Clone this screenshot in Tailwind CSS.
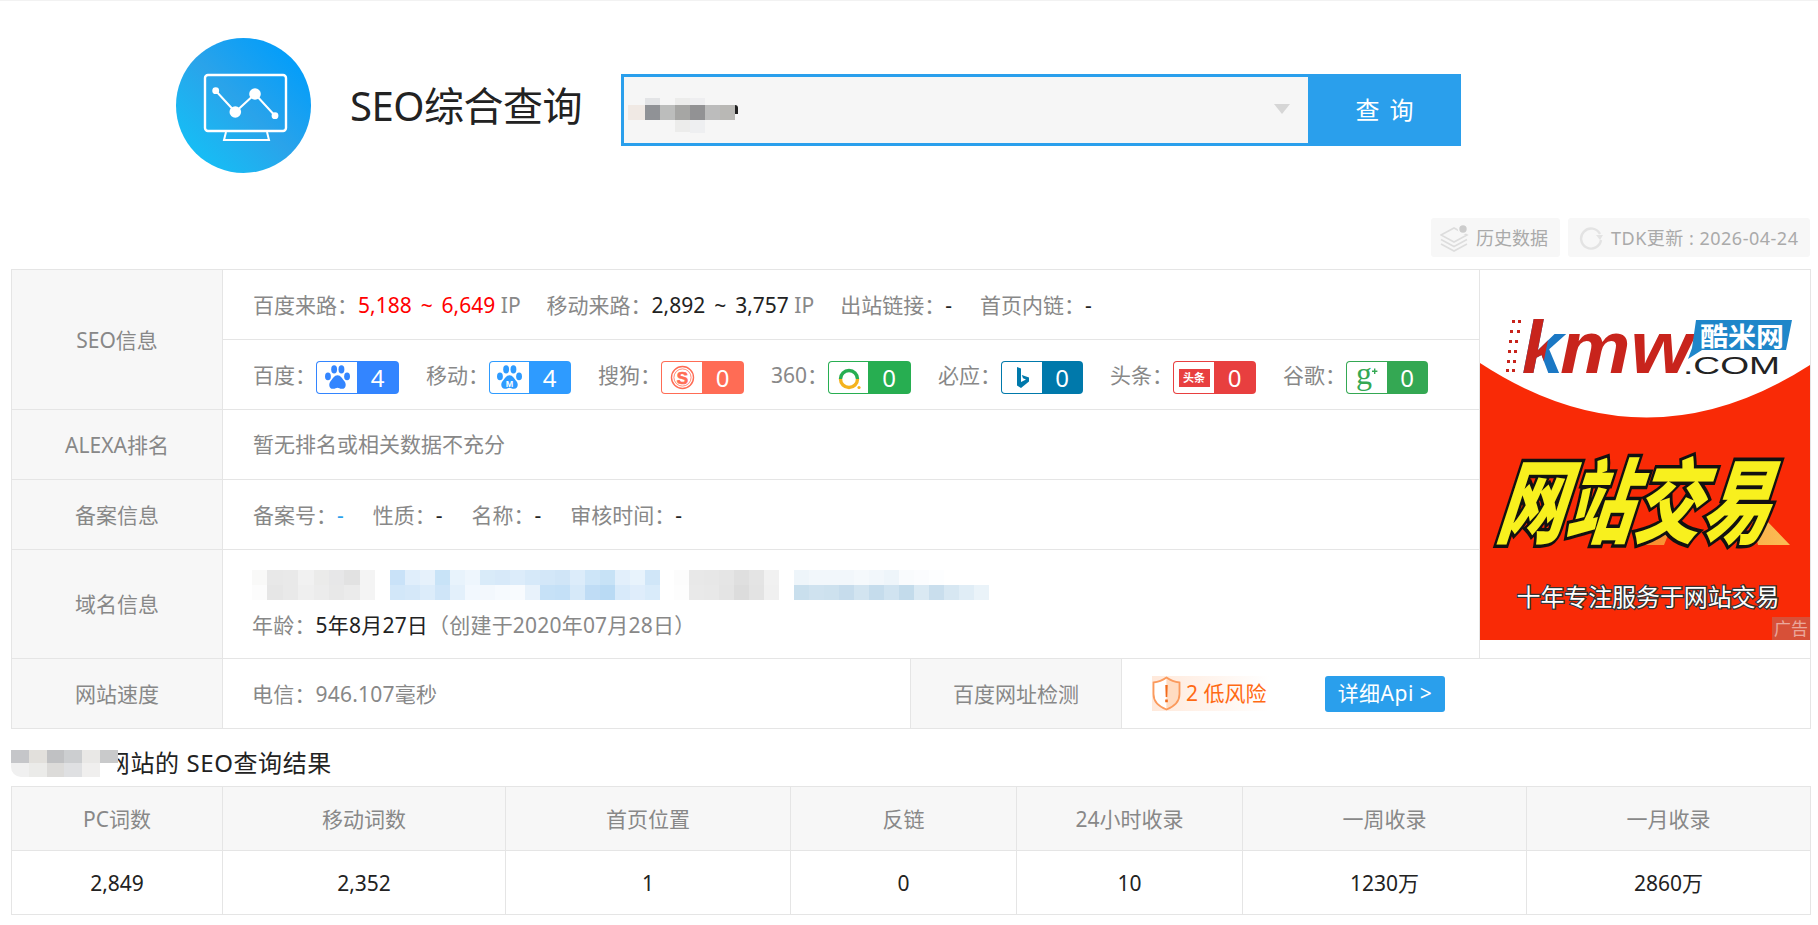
<!DOCTYPE html>
<html lang="zh-CN">
<head>
  <meta charset="UTF-8">
  <meta name="viewport" content="width=device-width, initial-scale=1.0">
  <title>SEO综合查询</title>
  <script src="https://cdn.jsdelivr.net/npm/@tailwindcss/browser@4"></script>
</head>
<body class="bg-white overflow-hidden font-['Noto_Sans','Noto_Sans_CJK_SC',sans-serif] text-[21px] text-[#888]">

  <div class="h-px bg-[#f2f2f2]"></div>

  <!-- Header -->
  <div class="flex items-center h-[209px] pl-[176px]">
    <svg class="w-[135px] h-[135px] shrink-0" viewBox="0 0 135 135">
      <defs>
        <linearGradient id="logoBg" x1="1" y1="0" x2="0" y2="1">
          <stop offset="0.1" stop-color="#009dfb"/>
          <stop offset="0.5" stop-color="#2aa3ea"/>
          <stop offset="0.9" stop-color="#14c0f6"/>
        </linearGradient>
      </defs>
      <circle cx="67.5" cy="67.5" r="67.5" fill="url(#logoBg)"/>
      <rect x="29" y="37" width="81" height="56" rx="3" fill="none" stroke="#fff" stroke-width="2.4"/>
      <path d="M50 94l-2 8h45l-2-8" fill="none" stroke="#fff" stroke-width="2"/>
      <path d="M39.7 52.7L59.3 74L79 56L99 77.7" fill="none" stroke="#fff" stroke-width="2"/>
      <circle cx="39.7" cy="52.7" r="3.4" fill="#fff"/>
      <circle cx="59.3" cy="74" r="5.8" fill="#fff"/>
      <circle cx="79" cy="56" r="5.8" fill="#fff"/>
      <circle cx="99" cy="77.7" r="3.4" fill="#fff"/>
    </svg>
    <h1 class="ml-[39px] mt-[1px] w-[231px] shrink-0 text-[40px] tracking-[-0.5px] leading-none font-normal text-[#222] whitespace-nowrap">SEO综合查询</h1>
    <div class="ml-[40px] mt-[9px] flex w-[840px] h-[72px] bg-[#2a9fec] shrink-0">
      <div class="flex items-center justify-between w-[684px] ml-[3px] my-[3px] bg-[#f6f6f6] pl-[4px] pr-[18px]">
        <div class="flex mt-[11px]">
          <div class="w-[17px] flex flex-col pt-[7px]"><div class="h-[15px] bg-[#f0e9e4]"></div></div>
          <div class="w-[15px] flex flex-col"><div class="h-[7px] bg-[#e3e4e6]"></div><div class="h-[15px] bg-[#909296]"></div></div>
          <div class="w-[15px] flex flex-col pt-[7px]"><div class="h-[15px] bg-[#bcbdbc]"></div></div>
          <div class="w-[15px] flex flex-col"><div class="h-[7px] bg-[#ececeb]"></div><div class="h-[15px] bg-[#a6a6a4]"></div><div class="h-[12px] bg-[#ececeb]"></div></div>
          <div class="w-[15px] flex flex-col"><div class="h-[7px] bg-[#eeeef0]"></div><div class="h-[15px] bg-[#929294]"></div><div class="h-[13px] bg-[#eeeff1]"></div></div>
          <div class="w-[15px] flex flex-col pt-[7px]"><div class="h-[15px] bg-[#bcbcbc]"></div></div>
          <div class="w-[15px] flex flex-col pt-[7px]"><div class="h-[15px] bg-[#b9b8b5]"></div></div>
          <div class="w-[3px] flex flex-col pt-[7px]"><div class="h-[9px] bg-[#222] rounded-tr-[3px]"></div></div>
        </div>
        <div class="-mt-[2px] w-0 h-0 border-x-[8px] border-x-transparent border-t-[10px] border-t-[#d6d6d6]"></div>
      </div>
      <div class="flex-1 flex items-center justify-center text-white text-[24px] [word-spacing:4px] whitespace-pre">查 询</div>
    </div>
  </div>

  <!-- Toolbar -->
  <div class="flex justify-end gap-[8px] pr-[8px] mt-[8px] h-[39px] text-[18px] text-[#aaa]">
    <div class="flex items-center gap-[7px] w-[129px] pl-[9px] bg-[#f7f7f7] rounded-[3px]">
      <svg class="w-[29px] h-[28px] shrink-0" viewBox="0 0 29 28" fill="none" stroke="#ddd" stroke-width="1.6">
        <path d="M1 11L14 4L27 11L14 18Z"/>
        <path d="M1 15.5L14 22.5L27 15.5"/>
        <path d="M1 20L14 27L27 20"/>
        <circle cx="23" cy="5" r="4.5" fill="#ccc" stroke="#f7f7f7"/>
      </svg>
      <span class="mt-px whitespace-nowrap">历史数据</span>
    </div>
    <div class="flex items-center gap-[8px] w-[242px] pl-[11px] bg-[#f7f7f7] rounded-[3px]">
      <svg class="w-[24px] h-[24px] shrink-0" viewBox="0 0 24 24" fill="none">
        <path d="M21 8A10 10 0 1 0 22 14" stroke="#e3e3e3" stroke-width="2.4"/>
        <path d="M17 9h7l-3 5z" fill="#e3e3e3"/>
      </svg>
      <span class="mt-px tracking-[0.5px] whitespace-nowrap">TDK更新 : 2026-04-24</span>
    </div>
  </div>

  <!-- SEO info table -->
  <div class="w-[1800px] ml-[11px] mt-[12px] border border-[#e5e5e5]">
    <div class="flex h-[389px] border-b border-[#e5e5e5]">
      <div class="flex flex-col w-[1467px] shrink-0">

        <div class="flex h-[140px] border-b border-[#e5e5e5]">
          <div class="w-[211px] shrink-0 flex items-center justify-center pt-[2px] bg-[#f7f7f7] border-r border-[#e5e5e5]">SEO信息</div>
          <div class="flex-1 flex flex-col">
            <div class="flex items-center gap-[26px] h-[70px] pl-[30px] pt-[2px] border-b border-[#e5e5e5] whitespace-nowrap">
              <span>百度来路：<span class="text-[#f00] [word-spacing:3.5px]">5,188 ~ 6,649</span> IP</span>
              <span>移动来路：<span class="text-[#222] [word-spacing:3.5px]">2,892 ~ 3,757</span> IP</span>
              <span>出站链接：<span class="text-[#222]">-</span></span>
              <span class="ml-[2px]">首页内链：<span class="text-[#222]">-</span></span>
            </div>
            <div class="flex items-center gap-[27px] flex-1 pl-[30px] pt-[6px] whitespace-nowrap">
              <div class="flex items-center">
                <span class="mb-[4px]">百度：</span>
                <div class="flex w-[83px] h-[33px] rounded-[4px] bg-[#3385ff] p-px items-stretch">
                  <div class="w-[40px] bg-white rounded-l-[3px] flex items-center justify-center">
                    <svg class="w-[27px] h-[27px]" viewBox="0 0 24 24" fill="#3385ff">
                      <ellipse cx="3.5" cy="11" rx="2.6" ry="3.4"/><ellipse cx="9" cy="4.8" rx="2.6" ry="3.6"/><ellipse cx="15.5" cy="4.8" rx="2.6" ry="3.6"/><ellipse cx="20.5" cy="11" rx="2.6" ry="3.4"/>
                      <path d="M12 10c-3 0-4 3-6 5-2 2-2 7 2 7 2 0 3-1 4-1s2 1 4 1c4 0 4-5 2-7-2-2-3-5-6-5z"/>
                    </svg>
                  </div>
                  <div class="flex-1 flex items-center justify-center text-white text-[24px]">4</div>
                </div>
              </div>
              <div class="flex items-center">
                <span class="mb-[4px]">移动：</span>
                <div class="flex w-[82px] h-[33px] rounded-[4px] bg-[#2e9bff] p-px items-stretch">
                  <div class="w-[39px] bg-white rounded-l-[3px] flex items-center justify-center">
                    <svg class="w-[27px] h-[27px]" viewBox="0 0 24 24" fill="#2e9bff">
                      <ellipse cx="3.5" cy="11" rx="2.6" ry="3.4"/><ellipse cx="9" cy="4.8" rx="2.6" ry="3.6"/><ellipse cx="15.5" cy="4.8" rx="2.6" ry="3.6"/><ellipse cx="20.5" cy="11" rx="2.6" ry="3.4"/>
                      <path d="M12 10c-3 0-4 3-6 5-2 2-2 7 2 7 2 0 3-1 4-1s2 1 4 1c4 0 4-5 2-7-2-2-3-5-6-5z"/>
                      <text x="12" y="20" text-anchor="middle" font-size="8" font-weight="700" fill="#fff" font-family="Liberation Sans">M</text>
                    </svg>
                  </div>
                  <div class="flex-1 flex items-center justify-center text-white text-[24px]">4</div>
                </div>
              </div>
              <div class="flex items-center">
                <span class="mb-[4px]">搜狗：</span>
                <div class="flex w-[83px] h-[33px] rounded-[4px] bg-[#ff6c55] p-px items-stretch">
                  <div class="w-[40px] bg-white rounded-l-[3px] flex items-center justify-center">
                    <svg class="w-[25px] h-[25px]" viewBox="0 0 25 25" fill="none" stroke="#ff6c55">
                      <circle cx="12.5" cy="12.5" r="11" stroke-width="1.4"/>
                      <circle cx="12.5" cy="12.5" r="8.6" stroke-width="0.8"/>
                      <text x="12.5" y="18.5" text-anchor="middle" font-size="17" font-weight="700" fill="#ff6c55" stroke="#ff6c55" stroke-width="0.7" font-family="Liberation Sans">S</text>
                    </svg>
                  </div>
                  <div class="flex-1 flex items-center justify-center text-white text-[24px]">0</div>
                </div>
              </div>
              <div class="flex items-center">
                <span class="mb-[4px]">360：</span>
                <div class="flex w-[83px] h-[33px] rounded-[4px] bg-[#27ae51] p-px items-stretch">
                  <div class="w-[39px] bg-white rounded-l-[3px] flex items-center justify-center">
                    <svg class="w-[24px] h-[24px]" viewBox="0 0 24 24" fill="none" stroke-width="3.4">
                      <path d="M3.5 13A8.5 8.5 0 0 1 20.5 13" stroke="#27ae51"/>
                      <path d="M3.5 13A8.5 8.5 0 0 0 20.5 13" stroke="#f4b31e"/>
                      <circle cx="22" cy="21.5" r="1.6" fill="#f4b31e" stroke="none"/>
                    </svg>
                  </div>
                  <div class="flex-1 flex items-center justify-center text-white text-[24px]">0</div>
                </div>
              </div>
              <div class="flex items-center">
                <span class="mb-[4px]">必应：</span>
                <div class="flex w-[82px] h-[33px] rounded-[4px] bg-[#0079ab] p-px items-stretch">
                  <div class="w-[40px] bg-white rounded-l-[3px] flex items-center justify-center">
                    <svg class="w-[24px] h-[28px]" viewBox="0 0 24 26" fill="#0079ab">
                      <path d="M7 2l4 1.500V17l5-2.500-3-1.200-1.200-3.300L19 12.500V16.500L11 23 7 20.500z"/>
                    </svg>
                  </div>
                  <div class="flex-1 flex items-center justify-center text-white text-[24px]">0</div>
                </div>
              </div>
              <div class="flex items-center">
                <span class="mb-[4px]">头条：</span>
                <div class="flex w-[83px] h-[33px] rounded-[4px] bg-[#e83f3f] p-px items-stretch">
                  <div class="w-[40px] bg-white rounded-l-[3px] flex items-center justify-center">
                    <div class="w-[31px] h-[18px] bg-[#e83f3f] flex items-center justify-center text-white text-[11px] leading-[18px] font-bold">头条</div>
                  </div>
                  <div class="flex-1 flex items-center justify-center text-white text-[24px]">0</div>
                </div>
              </div>
              <div class="flex items-center">
                <span class="mb-[4px]">谷歌：</span>
                <div class="flex w-[82px] h-[33px] rounded-[4px] bg-[#34a853] p-px items-stretch">
                  <div class="w-[40px] bg-white rounded-l-[3px] flex items-center justify-center">
                    <svg class="w-[30px] h-[28px]" viewBox="0 0 30 28" fill="#34a853">
                      <text x="4" y="20" font-size="32" font-family="Liberation Serif">g</text>
                      <path d="M20 6.500h2v-2h1.400v2h2v1.400h-2v2H22v-2h-2z"/>
                    </svg>
                  </div>
                  <div class="flex-1 flex items-center justify-center text-white text-[24px]">0</div>
                </div>
              </div>
            </div>
          </div>
        </div>

        <div class="flex h-[70px] border-b border-[#e5e5e5]">
          <div class="w-[211px] shrink-0 flex items-center justify-center pt-[2px] bg-[#f7f7f7] border-r border-[#e5e5e5]">ALEXA排名</div>
          <div class="flex-1 flex items-center pl-[30px] pt-[1px]">暂无排名或相关数据不充分</div>
        </div>

        <div class="flex h-[70px] border-b border-[#e5e5e5]">
          <div class="w-[211px] shrink-0 flex items-center justify-center pt-[2px] bg-[#f7f7f7] border-r border-[#e5e5e5]">备案信息</div>
          <div class="flex-1 flex items-center gap-[29px] pl-[30px] pt-[2px]">
            <span>备案号：<span class="text-[#2a9fec]">-</span></span>
            <span>性质：<span class="text-[#222]">-</span></span>
            <span>名称：<span class="text-[#222]">-</span></span>
            <span>审核时间：<span class="text-[#222]">-</span></span>
          </div>
        </div>

        <div class="flex flex-1">
          <div class="w-[211px] shrink-0 flex items-center justify-center pt-[2px] bg-[#f7f7f7] border-r border-[#e5e5e5]">域名信息</div>
          <div class="flex-1 flex flex-col pl-[29px] pt-[20px]">
            <!-- blurred registrar and owner -->
            <div class="flex h-[30px]">
              <div class="grid grid-cols-[repeat(8,15.4px)] grid-rows-2">
                <div class="bg-[#f9f9f8]"></div><div class="bg-[#e8e8e8]"></div><div class="bg-[#e9e9e9]"></div><div class="bg-[#f1f1f1]"></div><div class="bg-[#ebebea]"></div><div class="bg-[#e7e7e8]"></div><div class="bg-[#e2e2e2]"></div><div class="bg-[#f4f4f4]"></div>
                <div class="bg-[#fcfcfc]"></div><div class="bg-[#e6e6e6]"></div><div class="bg-[#e9e9e9]"></div><div class="bg-[#efefef]"></div><div class="bg-[#ececec]"></div><div class="bg-[#e8e8e8]"></div><div class="bg-[#ebebeb]"></div><div class="bg-[#f4f4f4]"></div>
              </div>
              <div class="ml-[15px] grid grid-cols-[repeat(18,15px)] grid-rows-2">
                <div class="bg-[#c9e2f8]"></div><div class="bg-[#e0eefb]"></div><div class="bg-[#e6f1fb]"></div><div class="bg-[#c8e3f7]"></div><div class="bg-[#e8f3fc]"></div><div class="bg-[#eef6fd]"></div><div class="bg-[#d9ebf9]"></div><div class="bg-[#d7e9f9]"></div><div class="bg-[#dcecfa]"></div><div class="bg-[#d6e9f9]"></div><div class="bg-[#d3e7f8]"></div><div class="bg-[#d0e5f7]"></div><div class="bg-[#dcecfa]"></div><div class="bg-[#cde5f8]"></div><div class="bg-[#c7e2f6]"></div><div class="bg-[#e2effb]"></div><div class="bg-[#e8f3fc]"></div><div class="bg-[#d0e6f8]"></div>
                <div class="bg-[#d2e7f9]"></div><div class="bg-[#d5e8f9]"></div><div class="bg-[#dcecfa]"></div><div class="bg-[#cfe5f8]"></div><div class="bg-[#e3f0fb]"></div><div class="bg-[#f2f8fe]"></div><div class="bg-[#f3f8fd]"></div><div class="bg-[#f6fafe]"></div><div class="bg-[#f8fbfe]"></div><div class="bg-[#e8f2fb]"></div><div class="bg-[#c6e1f7]"></div><div class="bg-[#c4e0f7]"></div><div class="bg-[#d6e9f9]"></div><div class="bg-[#bfdcf5]"></div><div class="bg-[#b9daf4]"></div><div class="bg-[#d8eafa]"></div><div class="bg-[#dfedfb]"></div><div class="bg-[#d9ebfa]"></div>
              </div>
              <div class="ml-[14px] grid grid-cols-[repeat(7,15px)] grid-rows-2">
                <div class="bg-[#fcfcfc]"></div><div class="bg-[#e8e8e8]"></div><div class="bg-[#e7e7e7]"></div><div class="bg-[#e5e5e5]"></div><div class="bg-[#dfdfdf]"></div><div class="bg-[#e4e4e4]"></div><div class="bg-[#f1f1f1]"></div>
                <div class="bg-[#fdfdfd]"></div><div class="bg-[#e9e9e9]"></div><div class="bg-[#e8e8e8]"></div><div class="bg-[#e4e4e4]"></div><div class="bg-[#dcdcdc]"></div><div class="bg-[#e3e3e3]"></div><div class="bg-[#f0f0f0]"></div>
              </div>
              <div class="ml-[15px] grid grid-cols-[repeat(13,15px)] grid-rows-[15px_15px]">
                <div class="bg-[#eef5fa]"></div><div class="bg-[#f2f7fb]"></div><div class="bg-[#f2f7fb]"></div><div class="bg-[#f2f7fb]"></div><div class="bg-[#f5f9fc]"></div><div class="bg-[#f2f7fb]"></div><div class="bg-[#eef5fa]"></div><div class="bg-[#f9fbfd]"></div><div class="bg-[#fbfcfe]"></div><div class="bg-[#fdfeff]"></div><div class="bg-white"></div><div class="bg-white"></div><div class="bg-white"></div>
                <div class="bg-[#c9dfed]"></div><div class="bg-[#cfe2ef]"></div><div class="bg-[#cde1ee]"></div><div class="bg-[#c6dcec]"></div><div class="bg-[#d2e4f0]"></div><div class="bg-[#c5dcec]"></div><div class="bg-[#d0e3f0]"></div><div class="bg-[#c3dbeb]"></div><div class="bg-[#dae9f3]"></div><div class="bg-[#c9deed]"></div><div class="bg-[#d7e7f2]"></div><div class="bg-[#e0edf6]"></div><div class="bg-[#eaf3f9]"></div>
              </div>
            </div>
            <div class="mt-[10px] tracking-[0.2px] whitespace-nowrap">年龄：<span class="text-[#222]">5年8月27日</span>（创建于2020年07月28日）</div>
          </div>
        </div>
      </div>

      <!-- Ad -->
      <div class="flex-1 border-l border-[#e5e5e5]">
        <svg class="block w-[330px] h-[370px]" viewBox="0 0 330 370">
          <defs>
            <clipPath id="kStem"><path d="M0 40H74L60 110H0Z"/></clipPath>
            <linearGradient id="glow" x1="0" y1="0" x2="1" y2="0">
              <stop offset="0" stop-color="#f98a2c"/>
              <stop offset="1" stop-color="#fbbd55"/>
            </linearGradient>
          </defs>
          <rect width="330" height="370" fill="#f92a06"/>
          <path d="M0 0H330V95Q165 201 0 93Z" fill="#fff"/>
          <g fill="#c8241c">
            <rect x="32" y="50" width="3" height="3"/><rect x="38" y="50" width="3" height="3"/><rect x="30" y="60" width="3" height="3"/><rect x="37" y="60" width="3" height="3"/><rect x="29" y="70" width="3" height="3"/><rect x="35" y="70" width="3" height="3"/><rect x="28" y="80" width="3" height="3"/><rect x="34" y="80" width="3" height="3"/><rect x="27" y="90" width="3" height="3"/><rect x="33" y="90" width="3" height="3"/><rect x="26" y="99" width="3" height="3"/><rect x="32" y="99" width="3" height="3"/>
          </g>
          <text x="42" y="103" font-family="Liberation Sans" font-weight="700" font-style="italic" font-size="74" fill="#1b78c4">k</text>
          <text x="42" y="103" font-family="Liberation Sans" font-weight="700" font-style="italic" font-size="74" fill="#c8241c" clip-path="url(#kStem)">k</text>
          <text x="80" y="103" font-family="Liberation Sans" font-weight="700" font-style="italic" font-size="74" fill="#c8241c" textLength="132" lengthAdjust="spacingAndGlyphs">mw</text>
          <path d="M216 50H312L306 80H222L208 89L212 78Z" fill="#1f86c9"/>
          <text x="262" y="76" text-anchor="middle" font-size="26" font-weight="700" fill="#fff" textLength="84" lengthAdjust="spacingAndGlyphs">酷米网</text>
          <text x="203" y="104" font-family="Liberation Sans" font-size="24" fill="#222" textLength="97" lengthAdjust="spacingAndGlyphs">.COM</text>
          <path d="M157 275L180 250H194L184 275ZM278 275L272 250H286L310 275Z" fill="url(#glow)"/>
          <g transform="translate(101 0) skewX(-18)">
            <text x="0" y="266" font-size="92" font-weight="900" fill="#f8f01e" stroke="#111" stroke-width="7" paint-order="stroke" textLength="273" lengthAdjust="spacingAndGlyphs">网站交易</text>
          </g>
          <text x="168" y="336" text-anchor="middle" font-size="24" fill="#fff" stroke="#333" stroke-width="2.500" paint-order="stroke" textLength="263">十年专注服务于网站交易</text>
          <rect x="292" y="347" width="38" height="23" fill="#999" fill-opacity="0.35"/>
          <text x="311" y="365" text-anchor="middle" font-size="17" fill="#fff" fill-opacity="0.5">广告</text>
        </svg>
      </div>
    </div>

    <div class="flex h-[69px]">
      <div class="w-[211px] shrink-0 flex items-center justify-center pt-[2px] bg-[#f7f7f7] border-r border-[#e5e5e5]">网站速度</div>
      <div class="w-[688px] shrink-0 flex items-center pl-[29px] pt-[2px] tracking-[0.2px] border-r border-[#e5e5e5]">电信：946.107毫秒</div>
      <div class="w-[211px] shrink-0 flex items-center justify-center pt-[2px] bg-[#f7f7f7] border-r border-[#e5e5e5]">百度网址检测</div>
      <div class="flex-1 flex items-center pl-[30px]">
        <div class="flex items-center gap-[5px] w-[117px] h-[35px] bg-gradient-to-r from-[#ffe9db] to-white">
          <svg class="w-[29px] h-[35px] shrink-0" viewBox="0 0 29 35">
            <path d="M14.500 1.500C11 4 6 6 1.500 6.500V18C1.500 26 8 31 14.500 33.500Z" fill="#fff"/>
            <path d="M14.500 1.500C18 4 23 6 27.500 6.500V18C27.500 26 21 31 14.500 33.500Z" fill="#ffdcc2"/>
            <path d="M14.500 1.500C11 4 6 6 1.500 6.500V18C1.500 26 8 31 14.500 33.500C21 31 27.500 26 27.500 18V6.500C23 6 18 4 14.500 1.500Z" fill="none" stroke="#fb9a5d" stroke-width="1.800"/>
            <path d="M13.300 9h2.400l-.4 12h-1.600zM13.200 23.500h2.600v2.800h-2.600z" fill="#f26a1b"/>
          </svg>
          <span class="text-[#ff6a13] whitespace-nowrap">2 低风险</span>
        </div>
        <div class="ml-[56px] flex items-center justify-center w-[120px] h-[36px] bg-[#2a9fec] rounded-[3px] text-white tracking-[0.5px] whitespace-nowrap">详细Api &gt;</div>
      </div>
    </div>
  </div>

  <!-- Result heading -->
  <div class="flex items-center ml-[11px] h-[57px] pt-[11px] text-[24px] tracking-[0.6px] text-[#222] whitespace-nowrap">
    <div class="relative z-10 -mr-[12px] grid grid-cols-[repeat(6,17.800px)] grid-rows-2 h-[27px] rounded-b-[10px] overflow-hidden">
      <div class="bg-[#c5c6c9]"></div><div class="bg-[#e2e0dc]"></div><div class="bg-[#c0c1c3]"></div><div class="bg-[#ccced0]"></div><div class="bg-[#e9e8e6]"></div><div class="bg-[#c9cacb]"></div>
      <div class="bg-[#f0f0f0]"></div><div class="bg-[#ebebe9]"></div><div class="bg-[#dcdbd9]"></div><div class="bg-[#dfe0e2]"></div><div class="bg-[#f0efee]"></div><div class="bg-white"></div>
    </div>
    <span>网站的 SEO查询结果</span>
  </div>

  <!-- Result table -->
  <div class="w-[1800px] ml-[11px] border border-[#e5e5e5] grid grid-cols-[211px_283px_285px_226px_226px_284px_283px] grid-rows-[64px_63px]">
    <div class="flex items-center justify-center pt-[2px] bg-[#f7f7f7] border-r border-b border-[#e5e5e5]">PC词数</div>
    <div class="flex items-center justify-center pt-[2px] bg-[#f7f7f7] border-r border-b border-[#e5e5e5]">移动词数</div>
    <div class="flex items-center justify-center pt-[2px] bg-[#f7f7f7] border-r border-b border-[#e5e5e5]">首页位置</div>
    <div class="flex items-center justify-center pt-[2px] bg-[#f7f7f7] border-r border-b border-[#e5e5e5]">反链</div>
    <div class="flex items-center justify-center pt-[2px] bg-[#f7f7f7] border-r border-b border-[#e5e5e5]">24小时收录</div>
    <div class="flex items-center justify-center pt-[2px] bg-[#f7f7f7] border-r border-b border-[#e5e5e5]">一周收录</div>
    <div class="flex items-center justify-center pt-[2px] bg-[#f7f7f7] border-b border-[#e5e5e5]">一月收录</div>
    <div class="flex items-center justify-center pt-[2px] text-[#222] border-r border-[#e5e5e5]">2,849</div>
    <div class="flex items-center justify-center pt-[2px] text-[#222] border-r border-[#e5e5e5]">2,352</div>
    <div class="flex items-center justify-center pt-[2px] text-[#222] border-r border-[#e5e5e5]">1</div>
    <div class="flex items-center justify-center pt-[2px] text-[#222] border-r border-[#e5e5e5]">0</div>
    <div class="flex items-center justify-center pt-[2px] text-[#222] border-r border-[#e5e5e5]">10</div>
    <div class="flex items-center justify-center pt-[2px] text-[#222] border-r border-[#e5e5e5]">1230万</div>
    <div class="flex items-center justify-center pt-[2px] text-[#222]">2860万</div>
  </div>

</body>
</html>
